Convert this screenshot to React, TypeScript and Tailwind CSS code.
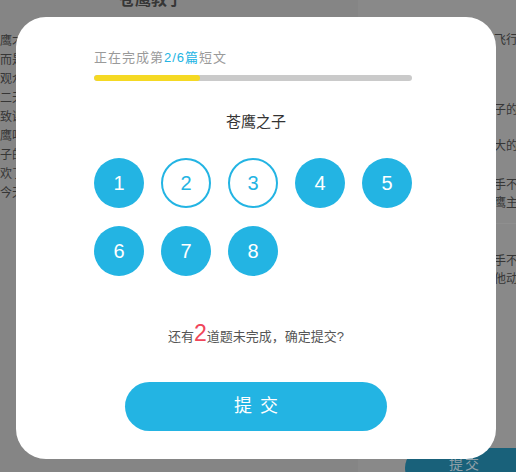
import React from "react";

const FONT = { fontFamily: '"Liberation Sans", "Noto Sans CJK SC", sans-serif' };

function Circle({ n, filled }: { n: number; filled: boolean }) {
  return filled ? (
    <div className="w-[50px] h-[50px] rounded-full bg-[#23b4e3] text-white flex items-center justify-center text-[20px] leading-none">
      {n}
    </div>
  ) : (
    <div className="w-[50px] h-[50px] rounded-full border-2 border-[#23b4e3] bg-white text-[#23b4e3] flex items-center justify-center text-[20px] leading-none">
      {n}
    </div>
  );
}

export default function App() {
  const leftLines = ["鹰才在", "而是", "观众", "二天", "致谢", "鹰听", "子的", "欢了", "今天"];
  const items = [
    { n: 1, f: true },
    { n: 2, f: false },
    { n: 3, f: false },
    { n: 4, f: true },
    { n: 5, f: true },
    { n: 6, f: true },
    { n: 7, f: true },
    { n: 8, f: true },
  ];
  return (
    <div className="relative w-[516px] h-[472px] overflow-hidden" style={FONT}>
      {/* dimmed page behind */}
      <div className="flex w-full h-full">
        <div className="relative w-[358px] shrink-0 h-full bg-[#858585] text-[#363636] text-[12px]">
          <div className="pl-[119px] -mt-[9px] text-[16px] font-bold leading-[18px]">苍鹰教子</div>
          <div className="flex flex-col mt-[23px] leading-[19px]">
            {leftLines.map((t, i) => (
              <div key={i} className="whitespace-nowrap">{t}</div>
            ))}
          </div>
        </div>
        <div className="relative flex-1 min-w-0 overflow-hidden h-full bg-[#898989] text-[#363636] text-[12px] leading-[18px]">
          <div className="pl-[100px] pt-[31px] whitespace-nowrap">着它在飞行的</div>
          <div className="pl-[100px] mt-[52px] whitespace-nowrap">是小鹰子的猎</div>
          <div className="pl-[100px] mt-[18px] whitespace-nowrap">它是最大的</div>
          <div className="pl-[100px] mt-[21px] whitespace-nowrap">不能静手不</div>
          <div className="pl-[100px] whitespace-nowrap">所以苍鹰主</div>
          <div className="mt-[11px] border-t border-[#8f8f8f] h-[1px]" />
          <div className="pl-[100px] mt-[28px] whitespace-nowrap">不能静手不</div>
          <div className="pl-[100px] whitespace-nowrap">还有其他动</div>
          <div className="absolute left-[47px] top-[448px] w-[140px] h-[40px] rounded-full bg-[#19617a] text-[#8fa0a8] text-[14px] pl-[44px] pt-[7px] tracking-[2px]">
            提交
          </div>
        </div>
      </div>

      {/* modal */}
      <div className="absolute left-[16px] top-[17px] w-[480px] h-[442px] bg-white rounded-[30px] pl-[78px] pt-[33px] flex flex-col">
        <div className="text-[13px] leading-[16px] text-[#9a9a9a] tracking-[1px]">
          正在完成第<span className="text-[#23b4e3]">2/6篇</span>短文
        </div>
        <div className="mt-[9px] h-[6px] w-[318px] rounded-full bg-[#cacaca] overflow-hidden">
          <div className="h-full w-[106px] bg-[#f5d923] rounded-full" />
        </div>
        <div className="w-[324px]">
          <div className="mt-[31px] text-center text-[15px] leading-[20px] text-[#333]">苍鹰之子</div>
        </div>
        <div className="mt-[26px] w-[318px] grid grid-cols-[repeat(5,50px)] gap-x-[17px] gap-y-[18px]">
          {items.map((it) => (
            <Circle key={it.n} n={it.n} filled={it.f} />
          ))}
        </div>
        <div className="w-[324px] mt-[45px] flex items-baseline justify-center text-[13px] leading-[24px] text-[#555]">
          还有<span className="text-[23px] text-[#f0465a] leading-[24px]">2</span>道题未完成，确定提交?
        </div>
        <div className="w-[324px] mt-[33px] flex justify-center">
          <button className="w-[262px] h-[49px] shrink-0 rounded-full bg-[#23b4e3] text-white text-[18px] tracking-[0.45em] pl-[8px]">
            提交
          </button>
        </div>
      </div>
    </div>
  );
}
